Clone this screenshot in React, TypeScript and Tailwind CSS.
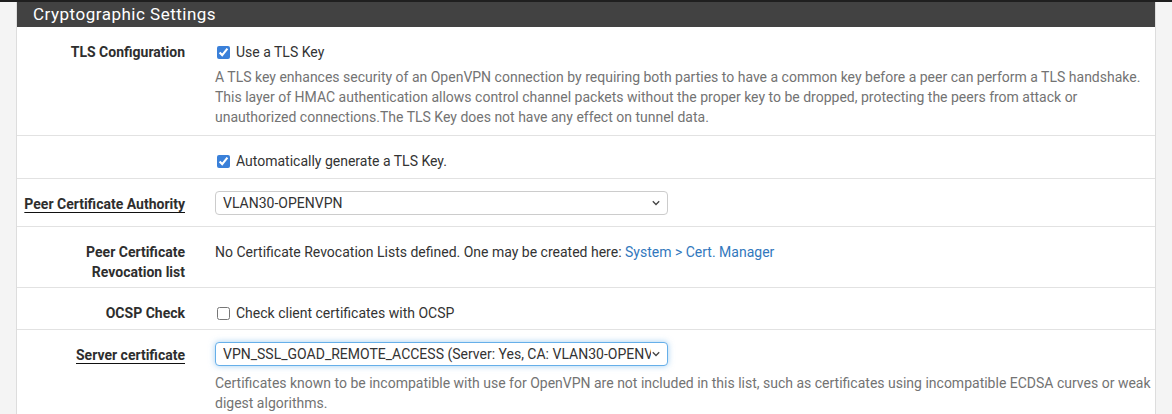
import React from "react";

const font = "font-['Roboto','Liberation_Sans',sans-serif]";

function Chevron() {
  return (
    <svg width="10" height="10" viewBox="0 0 10 10" className="shrink-0">
      <path d="M1.8 3.3 L5 6.5 L8.2 3.3" fill="none" stroke="#444" strokeWidth="1.3" />
    </svg>
  );
}

function Row({
  label,
  underline,
  pb,
  children,
}: {
  label?: React.ReactNode;
  underline?: boolean;
  pb: string;
  children: React.ReactNode;
}) {
  return (
    <div className={`flex border-t border-[#e2e2e2] pt-[15px] ${pb}`}>
      <div className="w-[183px] shrink-0 pr-[15px] text-right text-[14px] leading-[20px] font-bold text-[#2e2e2e]">
        {underline ? (
          <span className="underline decoration-[#111] underline-offset-[3px]">{label}</span>
        ) : (
          label
        )}
      </div>
      <div className="flex-1 pl-[15px] pr-[3px] text-[14px] leading-[20px] text-[#333]">{children}</div>
    </div>
  );
}

function Check({ checked, text }: { checked?: boolean; text: string }) {
  return (
    <label className="flex items-center">
      <input
        type="checkbox"
        defaultChecked={checked}
        className="m-0 ml-[2px] mr-[6px] h-[13px] w-[13px] accent-[#3a80d9]"
      />
      <span>{text}</span>
    </label>
  );
}

function Select({ value, focused }: { value: string; focused?: boolean }) {
  return (
    <div
      className={`flex h-[24px] w-[453px] items-center rounded-[4px] border bg-white pl-[7px] pr-[6px] ${
        focused
          ? "border-[#66afe9] shadow-[0_0_6px_rgba(102,175,233,0.6)]"
          : "border-[#cccccc]"
      }`}
    >
      <span className="flex-1 overflow-hidden whitespace-nowrap text-[#333]">{value}</span>
      <Chevron />
    </div>
  );
}

export default function App() {
  return (
    <div className={`min-h-[414px] bg-[#f4f4f4] ${font}`}>
      <div className="h-[2px] bg-[#1f1f1f]" />
      <div className="mx-4 border-x border-[#dddddd] bg-white">
        <div className="flex h-[25px] items-center bg-[#424242] pl-[16px] text-[17px] tracking-[0.5px] text-white">
          Cryptographic Settings
        </div>

        <div className="[&>div:first-child]:border-t-0">
          <Row label="TLS Configuration" pb="pb-[8px]">
            <Check checked text="Use a TLS Key" />
            <p className="mt-[5px] text-[#737373]">
              A TLS key enhances security of an OpenVPN connection by requiring both parties to have a common key
              before a peer can perform a TLS handshake. This layer of HMAC authentication allows control channel
              packets without the proper key to be dropped, protecting the peers from attack or unauthorized
              connections.The TLS Key does not have any effect on tunnel data.
            </p>
          </Row>

          <Row pb="pb-[7px]">
            <Check checked text="Automatically generate a TLS Key." />
          </Row>

          <Row label="Peer Certificate Authority" underline pb="pb-[11px]">
            <div className="-mt-[3px]">
              <Select value="VLAN30-OPENVPN" />
            </div>
          </Row>

          <Row
            label={
              <>
                Peer Certificate
                <br />
                Revocation list
              </>
            }
            pb="pb-[5px]"
          >
            No Certificate Revocation Lists defined. One may be created here:{" "}
            <a className="text-[#3278bd]">System &gt; Cert. Manager</a>
          </Row>

          <Row label="OCSP Check" pb="pb-[6px]">
            <Check text="Check client certificates with OCSP" />
          </Row>

          <Row label="Server certificate" underline pb="pb-[12px]">
            <div className="-mt-[3px]">
              <Select value="VPN_SSL_GOAD_REMOTE_ACCESS (Server: Yes, CA: VLAN30-OPENVPN)" focused />
            </div>
            <p className="mt-[7px] text-[#737373]">
              Certificates known to be incompatible with use for OpenVPN are not included in this list, such as
              certificates using incompatible ECDSA curves or weak digest algorithms.
            </p>
          </Row>
        </div>
      </div>
    </div>
  );
}
